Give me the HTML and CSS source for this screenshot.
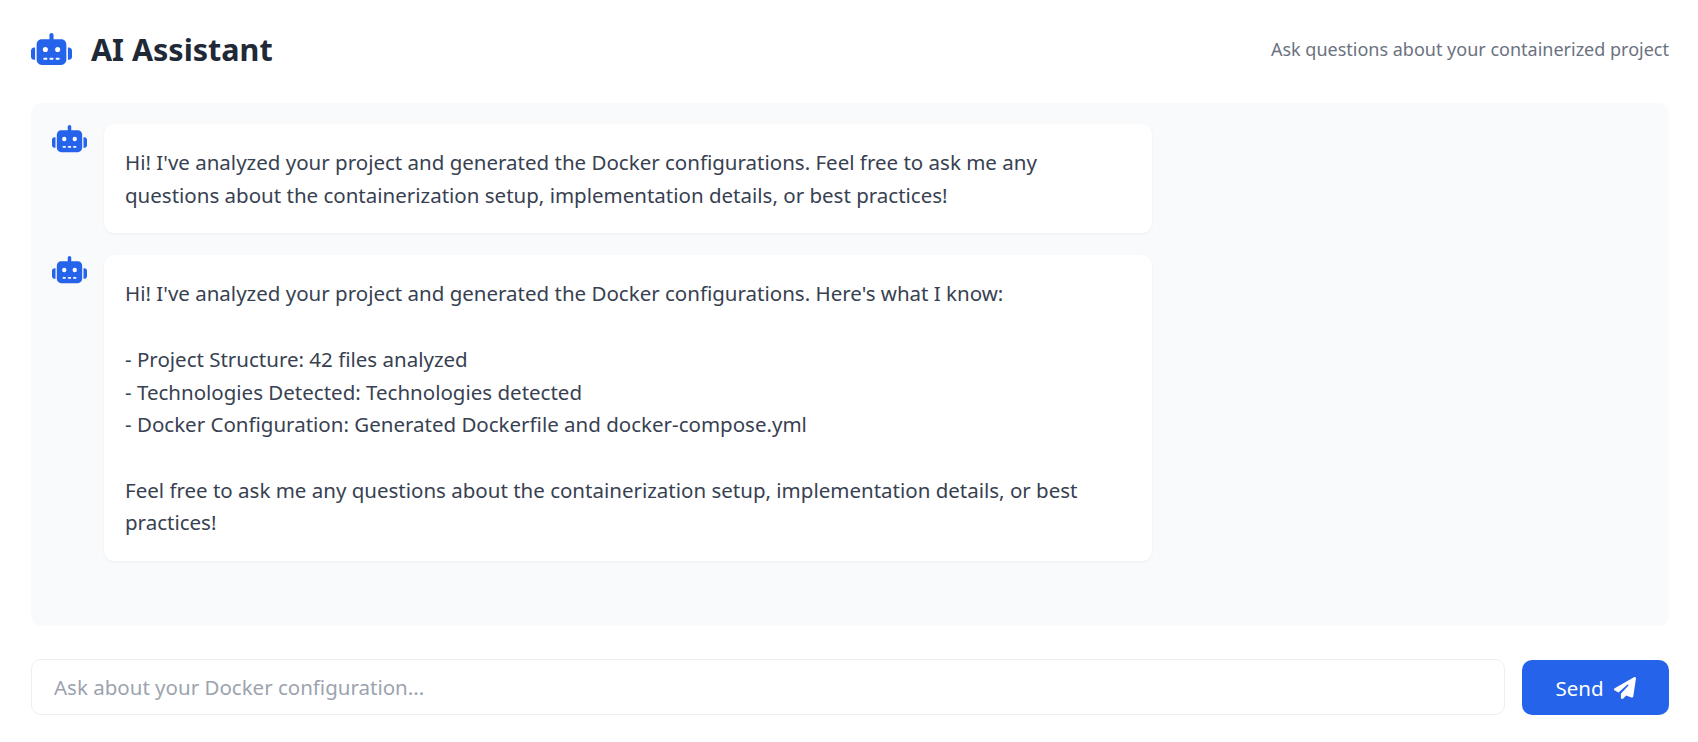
FILE: index.html

```html
<!DOCTYPE html>
<html lang="en">
<head>
  <meta charset="UTF-8">
  <meta name="viewport" content="width=device-width, initial-scale=1.0">
  <title>AI Assistant</title>
  <link rel="stylesheet" href="styles.css">
</head>
<body>
<div class="page">
  <header class="top">
    <h1 class="title">
      <svg class="title-icon" viewBox="0 0 640 512"><use href="#robot"></use></svg>
      AI Assistant
    </h1>
    <p class="subtitle">Ask questions about your containerized project</p>
  </header>

  <div class="chat">
    <div class="message">
      <svg class="avatar" viewBox="0 0 640 512"><use href="#robot"></use></svg>
      <div class="bubble">Hi! I've analyzed your project and generated the Docker configurations. Feel free to ask me any questions about the containerization setup, implementation details, or best practices!</div>
    </div>
    <div class="message">
      <svg class="avatar" viewBox="0 0 640 512"><use href="#robot"></use></svg>
      <div class="bubble">Hi! I've analyzed your project and generated the Docker configurations. Here's what I know:

- Project Structure: 42 files analyzed
- Technologies Detected: Technologies detected
- Docker Configuration: Generated Dockerfile and docker-compose.yml

Feel free to ask me any questions about the containerization setup, implementation details, or best practices!</div>
    </div>
  </div>

  <form class="composer">
    <input class="composer-input" type="text" placeholder="Ask about your Docker configuration...">
    <button class="send" type="button">
      Send
      <svg class="send-icon" viewBox="0 0 512 512"><path fill="currentColor" d="M498.1 5.6c10.1 7 15.4 19.1 13.5 31.2l-64 416c-1.5 9.7-7.4 18.2-16 23s-18.9 5.4-28 1.6L284 427.7l-68.5 74.1c-8.9 9.7-22.9 12.9-35.2 8.1S160 493.2 160 480V396.4c0-4 1.5-7.8 4.2-10.7L331.8 202.8c5.8-6.3 5.6-16-.4-22s-15.7-6.4-22-.7L106 360.8 17.7 316.6C7.1 311.3 .3 300.7 0 288.9s5.9-22.8 16.1-28.7l448-256c10.7-6.1 23.9-5.5 34 1.4z"/></svg>
    </button>
  </form>
</div>

<svg class="defs" aria-hidden="true">
  <symbol id="robot" viewBox="0 0 640 512">
    <path fill="currentColor" d="M320 0c17.7 0 32 14.3 32 32V96H472c44.2 0 80 35.8 80 80V416c0 44.2-35.8 80-80 80H168c-44.2 0-80-35.8-80-80V176c0-44.2 35.8-80 80-80H288V32c0-17.7 14.3-32 32-32zM208 384c-8.8 0-16 7.2-16 16s7.2 16 16 16h32c8.8 0 16-7.2 16-16s-7.2-16-16-16H208zm96 0c-8.8 0-16 7.2-16 16s7.2 16 16 16h32c8.8 0 16-7.2 16-16s-7.2-16-16-16H304zm96 0c-8.8 0-16 7.2-16 16s7.2 16 16 16h32c8.8 0 16-7.2 16-16s-7.2-16-16-16H400zM264 256a40 40 0 1 0 -80 0 40 40 0 1 0 80 0zm152 40a40 40 0 1 0 0-80 40 40 0 1 0 0 80zM48 224H64V416H48c-26.5 0-48-21.5-48-48V272c0-26.5 21.5-48 48-48zm544 0c26.5 0 48 21.5 48 48v96c0 26.5-21.5 48-48 48H576V224h16z"/>
  </symbol>
</svg>
</body>
</html>
```

FILE: styles.css

```css
* {
  box-sizing: border-box;
}

body {
  font-family: "Noto Sans", Arial, sans-serif;
  margin: 0;
  background-color: white;
  color: #374151;
}

.page {
  height: 742px;
  padding: 24px 29px 26px 31px;
  display: flex;
  flex-direction: column;
}

.top {
  display: flex;
  justify-content: space-between;
  align-items: center;
  height: 50px;
  margin-bottom: 29px;
}

.title {
  display: flex;
  align-items: center;
  gap: 19px;
  margin: 0;
  font-size: 30.5px;
  font-weight: 700;
  color: #1f2937;
}

.title-icon {
  width: 41px;
  height: 33px;
  color: #2563eb;
}

.subtitle {
  margin: 0;
  font-size: 18px;
  color: #6b7280;
}

.chat {
  height: 523px;
  padding: 21px;
  background-color: #f9fafb;
  border-radius: 10px;
  display: flex;
  flex-direction: column;
  gap: 22px;
}

.message {
  display: flex;
  gap: 17px;
  align-items: flex-start;
}

.avatar {
  width: 35px;
  height: 28px;
  margin-top: 1px;
  flex-shrink: 0;
  color: #2563eb;
}

.bubble {
  width: 1048px;
  padding: 22px 21px;
  background-color: white;
  border-radius: 10px;
  font-size: 20.5px;
  line-height: 32.7px;
  white-space: pre-line;
  box-shadow: 0 1px 3px rgba(0, 0, 0, 0.05);
}

.composer {
  display: flex;
  gap: 16px;
  margin-top: 33px;
}

.composer-input {
  flex: 1;
  height: 56px;
  padding: 0 22px;
  border: 1px solid #eceef1;
  border-radius: 10px;
  font-family: inherit;
  font-size: 20.5px;
  color: #374151;
}

.composer-input::placeholder {
  color: #9ca3af;
}

.send {
  display: flex;
  align-items: center;
  justify-content: center;
  gap: 10px;
  width: 147px;
  height: 55px;
  margin-top: 1px;
  margin-left: 1px;
  border: none;
  border-radius: 10px;
  background-color: #2563eb;
  color: white;
  font-family: inherit;
  font-size: 20.5px;
}

.send-icon {
  width: 22px;
  height: 22px;
}

.defs {
  display: none;
}
```
